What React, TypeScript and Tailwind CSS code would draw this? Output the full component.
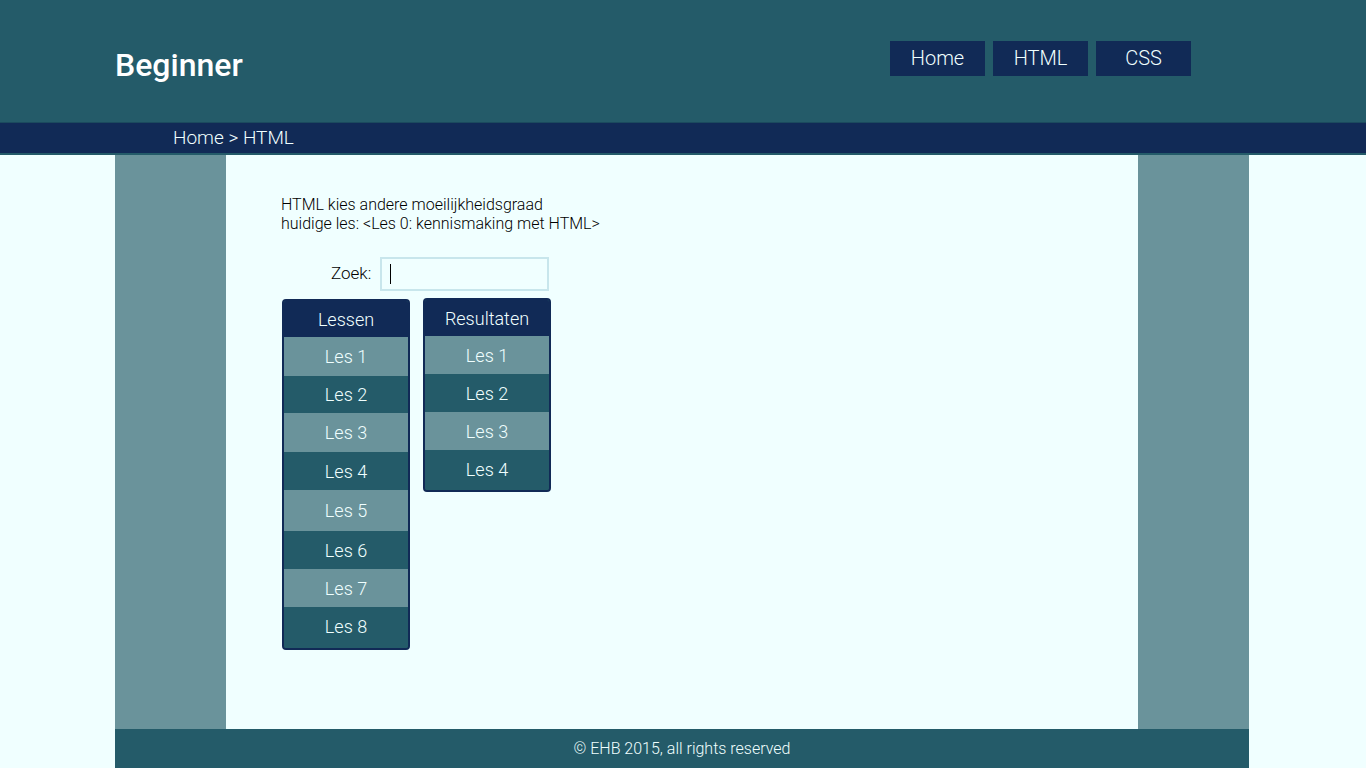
const lessen = ['Les 1', 'Les 2', 'Les 3', 'Les 4', 'Les 5', 'Les 6', 'Les 7', 'Les 8']
const lessenHeights = ['h-[39px]', 'h-[37px]', 'h-[39px]', 'h-[38px]', 'h-[41px]', 'h-[38px]', 'h-[38px]', 'h-[39px]']
const resultaten = ['Les 1', 'Les 2', 'Les 3', 'Les 4']

function LesList({ title, items, heights }: { title: string; items: string[]; heights?: string[] }) {
  return (
    <div className="w-[128px] rounded-[4px] border-2 border-[#112a56] bg-[#245b69] overflow-hidden">
      <div className="h-[36px] bg-[#112a56] text-[#f0ffff] text-[18px] font-light flex items-center justify-center">{title}</div>
      {items.map((it, i) => (
        <div key={i}
          className={`${heights ? heights[i] : 'h-[38px]'} flex items-center justify-center text-[18px] font-light text-[#f0ffff] ${i % 2 === 0 ? 'bg-[#6a939b]' : 'bg-[#245b69]'}`}>
          {it}
        </div>
      ))}
      <div className="h-[2px] bg-[#245b69]" />
    </div>
  )
}

export default function App() {
  return (
    <div className="min-h-[768px] bg-[#f0ffff] flex flex-col" style={{ fontFamily: 'Roboto, "Open Sans", sans-serif' }}>
      {/* Header */}
      <header className="h-[122px] bg-[#245b69] flex items-center justify-between pl-[115px] pr-[175px]">
        <h1 className="text-[32px] font-medium text-white mt-[8px]">Beginner</h1>
        <nav className="flex gap-[8px] -mt-[6px]">
          {['Home', 'HTML', 'CSS'].map((n) => (
            <a key={n} className="w-[95px] h-[35px] bg-[#112a56] text-[#f0ffff] text-[20px] font-light flex items-center justify-center">{n}</a>
          ))}
        </nav>
      </header>

      {/* Breadcrumb */}
      <div className="h-[33px] bg-[#112a56] border-t border-[#1b4a5e] border-b-2 border-b-[#245b69] pl-[173px] flex items-center">
        <span className="text-[19px] font-light text-[#f0ffff]">Home &gt; HTML</span>
      </div>

      {/* Body */}
      <div className="mx-[115px] w-[1134px] flex h-[574px]">
        <div className="w-[111px] bg-[#6a939b]" />
        <main className="flex-1 bg-[#f0ffff] pl-[55px] pt-[40px]">
          <p className="text-[16px] font-light leading-[19px] text-black">HTML kies andere moeilijkheidsgraad</p>
          <p className="text-[16px] font-light leading-[19px] text-black">huidige les: &lt;Les 0: kennismaking met HTML&gt;</p>
          <div className="flex items-center mt-[24px] ml-[50px]">
            <label className="text-[17px] font-light text-black mr-[9px]">Zoek:</label>
            <div className="w-[169px] h-[34px] border-2 border-[#c8e6ec] bg-[#f0ffff] flex items-center pl-[8px]">
              <div className="w-px h-[20px] bg-black" />
            </div>
          </div>
          <div className="flex items-start gap-[13px] mt-[8px] ml-[1px]">
            <LesList title="Lessen" items={lessen} heights={lessenHeights} />
            <div className="-mt-px">
              <LesList title="Resultaten" items={resultaten} />
            </div>
          </div>
        </main>
        <div className="w-[111px] bg-[#6a939b]" />
      </div>

      {/* Footer */}
      <footer className="mx-[115px] w-[1134px] h-[39px] bg-[#245b69] flex items-center justify-center">
        <span className="text-[16px] font-light text-[#f0ffff]">© EHB 2015, all rights reserved</span>
      </footer>
    </div>
  )
}
